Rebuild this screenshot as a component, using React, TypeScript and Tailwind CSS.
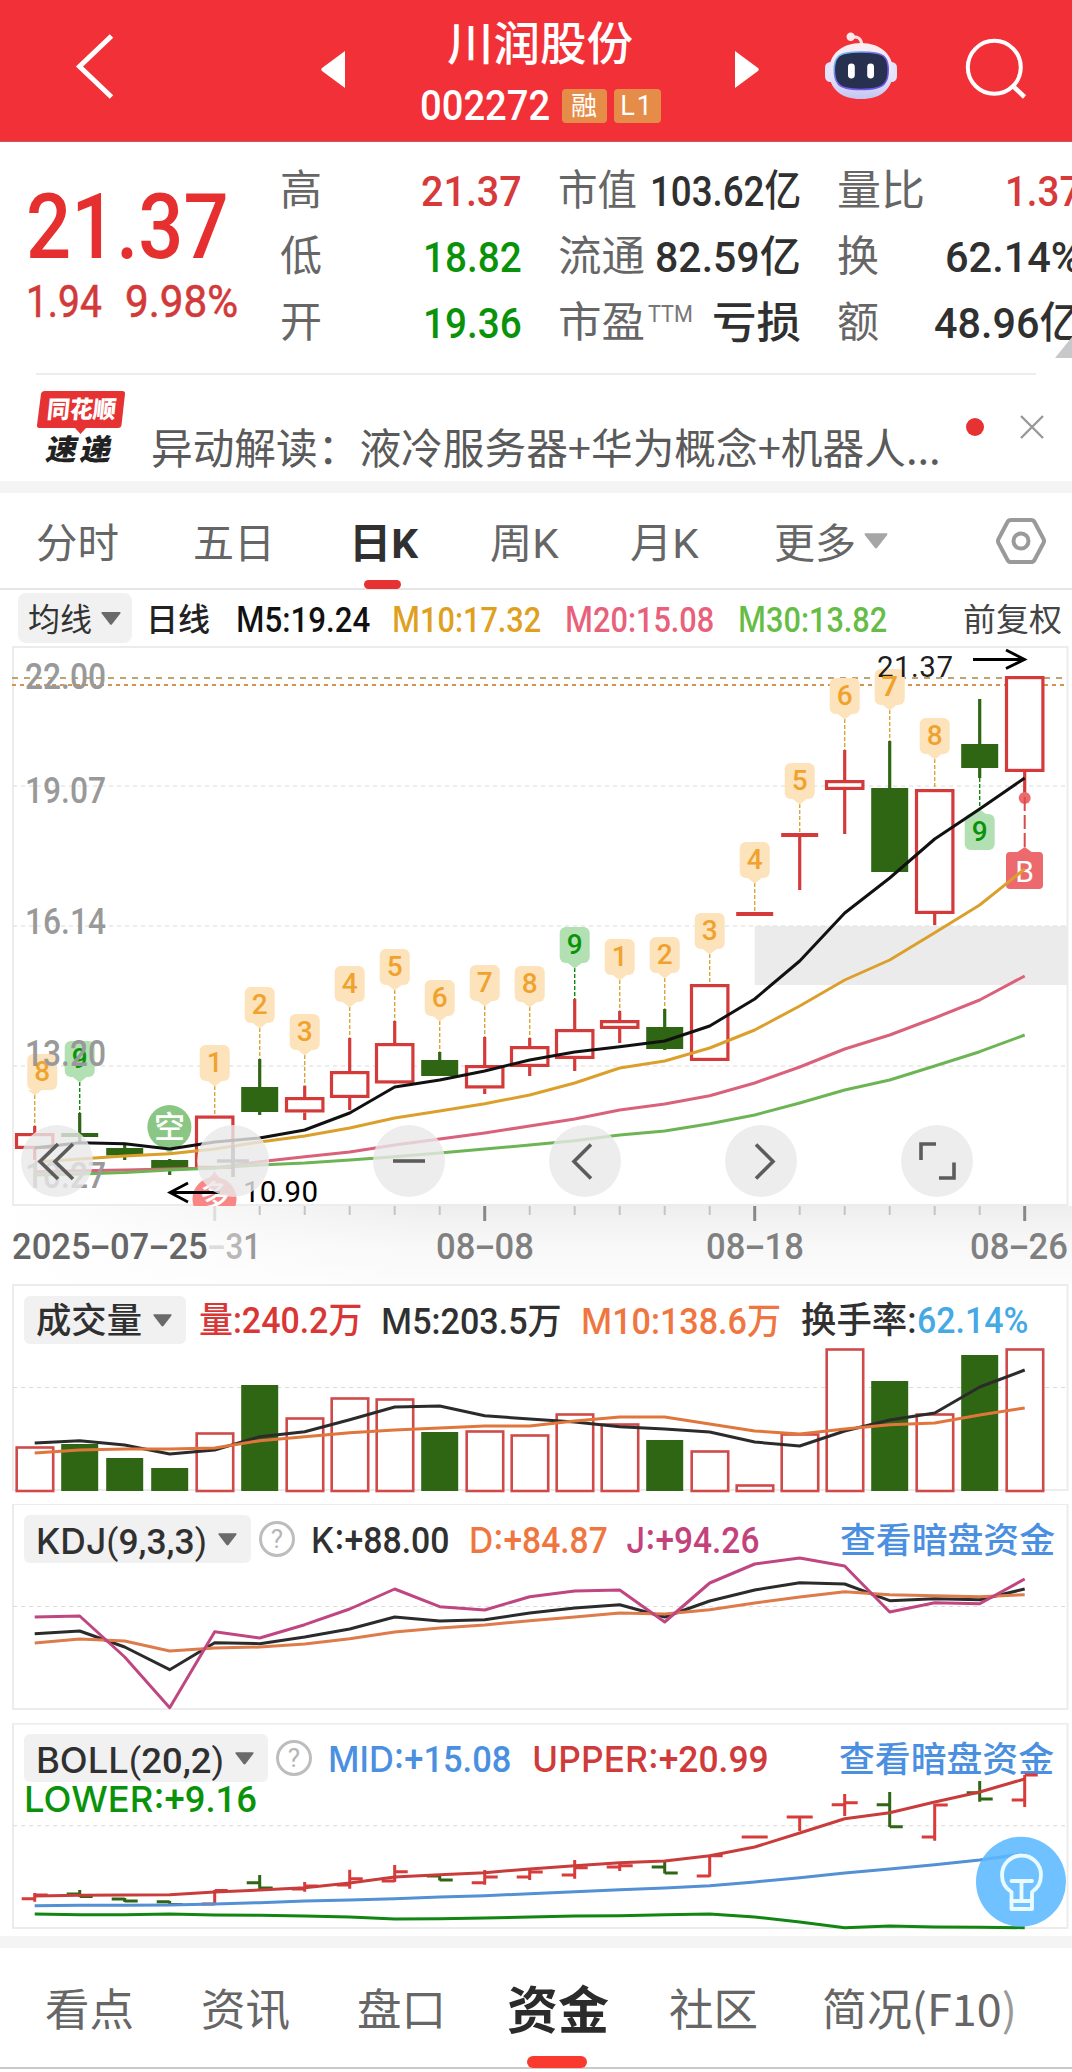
import React, { useLayoutEffect, useRef, useState } from "react";

const FONT = "Roboto, 'Noto Sans CJK SC', sans-serif";
const STEP = 45;
const X0 = 34.7;
const cx = (i: number) => X0 + i * STEP;

/* Condenses or stretches one line of text so that it fills its box. */
function Fit({ className = "", children }: { className?: string; children: React.ReactNode }) {
  const outer = useRef<HTMLSpanElement>(null);
  const inner = useRef<HTMLSpanElement>(null);
  const [k, setK] = useState(1);
  useLayoutEffect(() => {
    if (outer.current && inner.current) {
      setK(outer.current.clientWidth / inner.current.offsetWidth);
    }
  }, []);
  return (
    <span ref={outer} className={`inline-block shrink-0 whitespace-nowrap ${className}`}>
      <span ref={inner} className="inline-block origin-left" style={{ transform: `scaleX(${k})` }}>
        {children}
      </span>
    </span>
  );
}

/* Wide label letters followed by narrow figures. */
function Metric({ label, value, className }: { label: string; value: string; className: string }) {
  return (
    <Fit className={className}>
      <span className="font-['Inter','Noto_Sans_CJK_SC',sans-serif]">{label}</span>
      {value}
    </Fit>
  );
}

function Caret({ className }: { className: string }) {
  return (
    <svg viewBox="0 0 20 13" className={`shrink-0 ${className}`} fill="currentColor">
      <path d="M1 0H19Q20 .4 19.3 1.4L11 12.2Q10 13.2 9 12.2L.7 1.4Q0 .4 1 0Z" />
    </svg>
  );
}

function Help({ className = "" }: { className?: string }) {
  return (
    <span
      className={`flex h-[36px] w-[36px] shrink-0 items-center justify-center rounded-full border-[3px] border-[#bdbdbd] text-[26px] leading-none text-[#b5b5b5] ${className}`}
    >
      ?
    </span>
  );
}

/* ---------- header ---------- */

function Robot() {
  return (
    <svg viewBox="822 28 78 76" className="h-[76px] w-[78px] shrink-0">
      <defs>
        <linearGradient id="shell" x1="0" y1="0" x2="0" y2="1">
          <stop offset="0" stopColor="#fdeef2" />
          <stop offset="0.6" stopColor="#e6e2fb" />
          <stop offset="1" stopColor="#c3c6f2" />
        </linearGradient>
        <linearGradient id="rim" x1="0" y1="0" x2="1" y2="1">
          <stop offset="0" stopColor="#5fd3f0" />
          <stop offset="0.5" stopColor="#7a5cf0" />
          <stop offset="1" stopColor="#6d4fe8" />
        </linearGradient>
      </defs>
      <path d="M851 37.5Q861 35 862 45" fill="none" stroke="#fbe0e4" strokeWidth="3" />
      <circle cx="850.7" cy="36.7" r="4.2" fill="#fbe9ec" />
      <rect x="825" y="62" width="12" height="20" rx="5.5" fill="#e4e2fa" />
      <rect x="885" y="62" width="12" height="20" rx="5.5" fill="#e4e2fa" />
      <path d="M861 43C880 43 893 54 893 71C893 89 881 99 861 99C841 99 829 89 829 71C829 54 842 43 861 43Z" fill="url(#shell)" />
      <path
        d="M861 52C873 52 881 53 884.500 57C889.500 62 889.500 78 884.500 83.500C881 88 873 89.500 861 89.500C849 89.500 841 88 838 83.500C833 78 833 62 838 57C841 53 849 52 861 52Z"
        fill="#27304f"
        stroke="url(#rim)"
        strokeWidth="1.6"
      />
      <rect x="848" y="63.5" width="6.8" height="15" rx="3.4" fill="#fff" />
      <rect x="867.2" y="63.5" width="6.8" height="15" rx="3.4" fill="#fff" />
    </svg>
  );
}

function Header() {
  return (
    <header className="flex h-[142px] shrink-0 items-start border-b border-[#c9545a] bg-[#f23037] text-white">
      <svg viewBox="70 30 50 74" className="mt-[30px] ml-[70px] h-[74px] w-[50px] shrink-0" fill="none" stroke="#fff" strokeWidth="5">
        <path d="M111.500 36L79.500 66.500L111.500 97" />
      </svg>
      <svg viewBox="0 0 24 37" className="mt-[51px] ml-[201px] h-[37px] w-[24px] shrink-0" fill="#fff">
        <path d="M24 0V37L1 20Q-.5 18.500 1 17Z" />
      </svg>
      <div className="ml-[56px] flex w-[278px] flex-col items-center">
        <Fit className="mt-[16px] h-[56px] w-[186px] text-[46px] leading-[56px] font-medium">川润股份</Fit>
        <div className="mt-[13px] flex h-[42px] items-center gap-[7px]">
          <Fit className="mr-[5px] w-[130px] text-[42px] leading-[42px] font-medium">002272</Fit>
          <span className="flex h-[34px] w-[45px] items-center justify-center rounded-[4px] bg-[#e58d48] text-[26px] leading-none">融</span>
          <span className="flex h-[34px] w-[47px] items-center justify-center rounded-[4px] bg-[#e58d48] text-[27px] leading-none tracking-[2px]">L1</span>
        </div>
      </div>
      <svg viewBox="0 0 24 37" className="mt-[51px] ml-[56px] h-[37px] w-[24px] shrink-0" fill="#fff">
        <path d="M0 0V37L23 20Q24.500 18.500 23 17Z" />
      </svg>
      <div className="mt-[28px] ml-[63px]">
        <Robot />
      </div>
      <svg viewBox="960 34 70 70" className="mt-[34px] ml-[60px] h-[70px] w-[70px] shrink-0" fill="none" stroke="#fff" strokeWidth="4">
        <circle cx="994.3" cy="67.3" r="26.500" />
        <path d="M1013 86L1024.500 97" strokeWidth="4.500" />
      </svg>
    </header>
  );
}

/* ---------- quote ---------- */

function Quote() {
  const label = "h-[66px] text-[42px] leading-[66px] text-[#666]";
  const value = "h-[66px] text-[43px] leading-[66px] font-medium";
  return (
    <section className="relative flex h-[231px] shrink-0 overflow-hidden">
      <div className="ml-[26px] w-[254px] shrink-0">
        <Fit className="mt-[43px] h-[86px] w-[203px] text-[90px] leading-[86px] font-medium text-[#e63030]">21.37</Fit>
        <div className="mt-[7px] flex gap-[23px] text-[#d23a3a]">
          <Fit className="h-[48px] w-[76px] text-[44px] leading-[48px] [-webkit-text-stroke:0.6px]">1.94</Fit>
          <Fit className="h-[48px] w-[113px] text-[44px] leading-[48px] [-webkit-text-stroke:0.6px]">9.98%</Fit>
        </div>
      </div>
      <div className="mt-[16px] grid w-[242px] shrink-0 content-start">
        <div className="flex justify-between">
          <span className={label}>高</span>
          <Fit className={`${value} w-[101px] text-[#d63a3a]`}>21.37</Fit>
        </div>
        <div className="flex justify-between">
          <span className={label}>低</span>
          <Fit className={`${value} w-[99px] text-[#0a930a]`}>18.82</Fit>
        </div>
        <div className="flex justify-between">
          <span className={label}>开</span>
          <Fit className={`${value} w-[99px] text-[#0a930a]`}>19.36</Fit>
        </div>
      </div>
      <div className="mt-[16px] ml-[36px] grid w-[243px] shrink-0 content-start">
        <div className="flex justify-between">
          <Fit className={`${label} w-[79px]`}>市值</Fit>
          <Fit className={`${value} w-[151px] text-[#303030]`}>103.62亿</Fit>
        </div>
        <div className="flex justify-between">
          <Fit className={`${label} w-[87px]`}>流通</Fit>
          <Fit className={`${value} w-[146px] text-[#303030]`}>82.59亿</Fit>
        </div>
        <div className="flex justify-between">
          <span className="flex">
            <Fit className={`${label} w-[87px]`}>市盈</Fit>
            <Fit className="ml-[3px] h-[50px] w-[45px] text-[24px] leading-[48px] text-[#777]">TTM</Fit>
          </span>
          <Fit className={`${value} w-[89px] text-[#303030]`}>亏损</Fit>
        </div>
      </div>
      <div className="mt-[16px] ml-[36px] grid w-[244px] shrink-0 content-start">
        <div className="flex justify-between">
          <Fit className={`${label} w-[88px]`}>量比</Fit>
          <Fit className={`${value} w-[76px] text-[#d63a3a]`}>1.37</Fit>
        </div>
        <div className="flex justify-between">
          <span className={label}>换</span>
          <Fit className={`${value} w-[136px] text-[#303030]`}>62.14%</Fit>
        </div>
        <div className="flex justify-between">
          <span className={label}>额</span>
          <Fit className={`${value} w-[147px] text-[#303030]`}>48.96亿</Fit>
        </div>
      </div>
      <svg viewBox="0 0 17 21" className="absolute right-0 bottom-[15px] h-[21px] w-[17px]" fill="#c8c8c8">
        <path d="M17 0V21H0Z" />
      </svg>
    </section>
  );
}

function News() {
  return (
    <section className="mx-[36px] flex h-[108px] shrink-0 items-start border-t-2 border-[#ececec]">
      <div className="relative mt-[16px] h-[74px] w-[90px] shrink-0">
        <svg viewBox="36 391 90 43" className="h-[43px] w-[90px]" fill="#e63232">
          <path d="M45 391H122Q125.500 391 125 394L121.500 425Q121 428 118 428H86L80.500 434L75 428H39.500Q36.500 428 37 425L41 394Q41.500 391 45 391Z" />
        </svg>
        <Fit className="absolute top-[5px] left-[11px] h-[28px] w-[69px] -skew-x-6 text-[24px] leading-[28px] font-black text-white">同花顺</Fit>
        <Fit className="absolute top-[43px] left-[11px] h-[32px] w-[65px] -skew-x-12 text-[29px] leading-[32px] font-black text-[#222]">
          速<span className="inline-block w-[3px]" />递
        </Fit>
      </div>
      <Fit className="mt-[44px] ml-[25px] h-[54px] w-[790px] text-[42px] leading-[54px] text-[#5a5a5a]">
        <span className="font-['Noto_Sans_CJK_SC',sans-serif]">异动解读：液冷服务器+华为概念+机器人...</span>
      </Fit>
      <span className="mt-[43px] ml-[25px] h-[18px] w-[18px] shrink-0 rounded-full bg-[#e63232]" />
      <svg viewBox="0 0 24 24" className="mt-[40px] ml-[36px] h-[24px] w-[24px] shrink-0" stroke="#999" strokeWidth="2.4">
        <path d="M1 1L23 23M23 1L1 23" />
      </svg>
    </section>
  );
}

function PeriodTabs() {
  const t = "h-[95px] text-[41px] leading-[102px] text-[#666]";
  return (
    <nav className="flex h-[97px] shrink-0 items-start border-b-2 border-[#e6e6e6]">
      <Fit className={`${t} ml-[36px] w-[83px]`}>分时</Fit>
      <Fit className={`${t} ml-[74px] w-[82px]`}>五日</Fit>
      <div className="ml-[74px] flex w-[69px] shrink-0 flex-col items-start">
        <Fit className="h-[87px] w-[69px] text-[41px] leading-[102px] font-bold text-[#303030]">日K</Fit>
        <span className="ml-[15px] h-[9px] w-[37px] rounded-full bg-[#e63232]" />
      </div>
      <Fit className={`${t} ml-[72px] w-[69px]`}>周K</Fit>
      <Fit className={`${t} ml-[71px] w-[69px]`}>月K</Fit>
      <Fit className={`${t} ml-[75px] w-[82px]`}>更多</Fit>
      <Caret className="mt-[39px] ml-[8px] h-[18px] w-[24px] text-[#a6a6a6]" />
      <svg viewBox="0 0 52 50" className="mt-[23px] ml-[107px] h-[50px] w-[52px] shrink-0" fill="none" stroke="#9a9a9a" strokeWidth="4" strokeLinejoin="round">
        <path d="M16 4H36Q38.500 4 39.500 6L48.500 23Q49.500 25 48.500 27L39.500 44Q38.500 46 36 46H16Q13.500 46 12.500 44L3.500 27Q2.500 25 3.500 23L12.500 6Q13.500 4 16 4Z" />
        <circle cx="26" cy="25" r="7.500" />
      </svg>
    </nav>
  );
}

function AverageRow() {
  const m = "h-[50px] text-[35px] leading-[53px]";
  return (
    <div className="flex h-[56px] shrink-0 items-start pt-[3px] font-medium">
      <div className="ml-[18px] flex h-[50px] w-[114px] shrink-0 items-center rounded-[8px] bg-[#f1f1f1] pl-[10px] text-[#333]">
        <Fit className="h-[50px] w-[64px] text-[32px] leading-[54px] font-normal">均线</Fit>
        <Caret className="ml-[9px] h-[13px] w-[20px] text-[#6a6a6a]" />
      </div>
      <Fit className="ml-[14px] h-[50px] w-[64px] text-[32px] leading-[54px] text-[#222]">日线</Fit>
      <Metric label="M" value="5:19.24" className={`${m} ml-[26px] w-[134px] text-[#111]`} />
      <Metric label="M" value="10:17.32" className={`${m} ml-[22px] w-[149px] text-[#dfa01f]`} />
      <Metric label="M" value="20:15.08" className={`${m} ml-[24px] w-[149px] text-[#e8607a]`} />
      <Metric label="M" value="30:13.82" className={`${m} ml-[24px] w-[149px] text-[#66bd46]`} />
      <Fit className="ml-[76px] h-[50px] w-[99px] text-[32px] leading-[54px] font-normal text-[#444]">前复权</Fit>
    </div>
  );
}

/* ---------- main chart ---------- */

type Candle = { up: boolean; hi: number; top: number; bot: number; lo: number };
const c = (up: boolean, hi: number, top: number, bot: number, lo: number): Candle => ({ up, hi, top, bot, lo });
const candles: Candle[] = [
  c(true, 1126, 1133, 1149, 1160), c(false, 1113, 1133, 1137, 1142), c(false, 1144, 1148, 1155.5, 1160),
  c(false, 1159, 1160, 1168, 1175), c(true, 1115.5, 1115.5, 1169, 1169), c(false, 1059, 1087, 1112, 1115),
  c(true, 1085.7, 1097, 1112.5, 1120), c(true, 1038, 1071, 1098, 1110), c(true, 1021, 1043, 1083.5, 1084),
  c(false, 1052, 1060, 1076, 1076), c(true, 1037, 1065, 1088.5, 1094), c(true, 1038, 1046, 1067, 1076),
  c(true, 999, 1029, 1059, 1071), c(true, 1011, 1020, 1029, 1043), c(false, 1009, 1027, 1049, 1050),
  c(true, 984, 984, 1061, 1061), c(true, 912, 912, 916, 916), c(true, 833, 833, 837, 890),
  c(true, 750, 780, 790, 834), c(false, 741, 788, 872, 872), c(true, 789, 789, 914, 925),
  c(false, 699, 744, 768, 778), c(true, 676, 676, 772, 797),
];

const ma5 = [1148, 1142.7, 1143.7, 1149, 1142, 1138, 1130, 1113, 1087, 1080, 1071, 1060, 1052, 1046.7, 1041, 1026, 999, 961, 913, 878, 839, 809, 778];
const ma10 = [1162, 1159, 1156, 1153.7, 1149, 1142, 1136, 1128, 1118, 1111, 1103.7, 1095, 1083, 1068, 1061, 1048, 1030, 1006, 980, 960, 932.7, 905, 869];
const ma20 = [1171.7, 1170.7, 1170, 1169, 1168, 1161.7, 1156.7, 1152, 1145, 1139, 1133, 1126, 1119, 1110, 1104, 1095.7, 1083, 1067, 1049, 1035, 1018, 1000, 976];
const ma30 = [1175, 1174, 1172.5, 1170, 1168, 1165, 1163, 1160, 1156.7, 1153, 1149, 1145, 1140.7, 1135, 1131, 1123.7, 1115, 1103, 1090, 1080, 1066, 1051.7, 1035];

const tags: [number, string, number][] = [
  [0, "8", 1054], [1, "9", 1041], [4, "1", 1045], [5, "2", 987], [6, "3", 1014], [7, "4", 966], [8, "5", 949],
  [9, "6", 980], [10, "7", 965], [11, "8", 966], [12, "9", 927], [13, "1", 939], [14, "2", 937], [15, "3", 913],
  [16, "4", 842], [17, "5", 763], [18, "6", 678], [19, "7", 669], [20, "8", 718],
];

function Line({ ys, color, width = 3 }: { ys: number[]; color: string; width?: number }) {
  return (
    <polyline
      points={ys.map((y, i) => `${cx(i)},${y}`).join(" ")}
      fill="none"
      stroke={color}
      strokeWidth={width}
      strokeLinejoin="round"
    />
  );
}

function Tag({ i, n, y }: { i: number; n: string; y: number }) {
  const green = n === "9";
  const x = cx(i);
  const bx = i === 0 ? x + 7.5 : x;
  const fill = green ? "#b2e0b2" : "#fde3bb";
  return (
    <g>
      <line x1={x} x2={x} y1={y + 41} y2={candles[i].hi} stroke={green ? "#0b8a0b" : "#d9a63a"} strokeWidth="1.4" strokeDasharray="4 2" />
      <rect x={bx - 15} y={y} width="30" height="36" rx="6" fill={fill} />
      <path d={`M${x - 7} ${y + 36}H${x + 7}L${x} ${y + 41.5}Z`} fill={fill} />
      <text x={bx} y={y + 27} textAnchor="middle" fontSize="28" fontWeight="500" fill={green ? "#0a930a" : "#f0a22e"}>
        {n}
      </text>
    </g>
  );
}

function AxisPrice({ y, children }: { y: number; children: string }) {
  return (
    <text x="25" y={y} fontSize="36" fontWeight="500" fill="#999" textLength="81" lengthAdjust="spacingAndGlyphs">
      {children}
    </text>
  );
}

function PriceChart() {
  return (
    <svg viewBox="0 646 1072 560" className="block h-[560px] w-full" fontFamily={FONT}>
      <rect x="13" y="647" width="1054.500" height="558" fill="none" stroke="#ececec" strokeWidth="2" />
      <rect x="754.7" y="926" width="313" height="59" fill="#ebebeb" />
      {[786, 926, 1066].map((y) => (
        <line key={y} x1="13" x2="1067" y1={y} y2={y} stroke="#e6e6e6" strokeWidth="1.6" strokeDasharray="4 4" />
      ))}
      <line x1="12" x2="1067" y1="678" y2="678" stroke="#bda374" strokeWidth="2" strokeDasharray="6 6" />
      <line x1="12" x2="1067" y1="685" y2="685" stroke="#d9924e" strokeWidth="2" strokeDasharray="4 4" />

      {candles.map((k, i) => {
        const color = k.up ? "#d43a3a" : "#2f6613";
        const x = cx(i);
        return (
          <g key={i} stroke={color} strokeWidth="3.2">
            {k.hi < k.top && <line x1={x} x2={x} y1={k.hi} y2={k.top} />}
            {k.lo > k.bot && <line x1={x} x2={x} y1={k.bot} y2={k.lo} />}
            {k.up && k.bot - k.top > 5 ? (
              <rect x={x - 18.200} y={k.top + 1.6} width="36.400" height={k.bot - k.top - 3.2} fill="#fff" />
            ) : (
              <rect x={x - 18.500} y={k.top} width="37" height={k.bot - k.top} fill={color} stroke="none" />
            )}
          </g>
        );
      })}

      <g opacity="0.9">
        <circle cx="169.400" cy="1127" r="22" fill="#7fc177" />
        <path d="M163 1147L169.400 1155L176 1147Z" fill="#a9d6a4" />
        <text x="169.400" y="1138" textAnchor="middle" fontSize="31" fontWeight="500" fill="#fff">空</text>
      </g>
      <g>
        <path d="M202 1183Q212 1177 214.500 1171Q217 1177 227 1183Z" fill="#f59a9a" />
        <circle cx="214.500" cy="1199" r="22" fill="#f98585" />
        <text x="214.500" y="1206" textAnchor="middle" fontSize="30" fontWeight="500" fill="#fff">多</text>
        <rect x="190" y="1206" width="50" height="20" fill="#fff" />
      </g>

      {tags.map(([i, n, y]) => (
        <Tag key={i} i={i} n={n} y={y} />
      ))}
      <text x="877" y="677" fontSize="29.500" fill="#000" fillOpacity="0.9" textLength="76">21.37</text>
      <text x={cx(19)} y="696" textAnchor="middle" fontSize="28" fontWeight="500" fill="#f0a22e">7</text>
      <g>
        <line x1={cx(21)} x2={cx(21)} y1="778" y2="810" stroke="#0b8a0b" strokeWidth="1.4" strokeDasharray="4 2" />
        <path d={`M${cx(21) - 7} 814.500L${cx(21)} 809.500L${cx(21) + 7} 814.500Z`} fill="#b2e0b2" />
        <rect x={cx(21) - 15} y="814" width="30" height="36" rx="6" fill="#b2e0b2" />
        <text x={cx(21)} y="841" textAnchor="middle" fontSize="28" fontWeight="500" fill="#0a930a">9</text>
      </g>
      <g>
        <circle cx="1024.7" cy="798" r="6" fill="#ec6a6e" />
        <line x1="1024.7" x2="1024.7" y1="797" y2="848" stroke="#d94a4a" strokeWidth="2" strokeDasharray="14 4" />
        <path d="M1016 853L1024.7 847L1033 853Z" fill="#ec6a6e" />
        <rect x="1006" y="852" width="37" height="37" rx="4" fill="#ec6a6e" />
        <text x="1024.7" y="881.500" textAnchor="middle" fontSize="30" fill="#fff">B</text>
      </g>

      <Line ys={ma20} color="#d9627a" />
      <Line ys={ma30} color="#6db554" />
      <Line ys={ma10} color="#dba02c" />
      <Line ys={ma5} color="#111" />

      <g fill="none" stroke="#000" strokeWidth="2.8">
        <path d="M973 659.500H1024M1006 650L1024.500 659.500L1006 668.500" />
        <path d="M170 1192.500H220M188 1183L170 1192.500L188 1202" />
      </g>
      <text x="243" y="1201.500" fontSize="29.500" fill="#000" textLength="75">10.90</text>

      <AxisPrice y={689}>22.00</AxisPrice>
      <AxisPrice y={803}>19.07</AxisPrice>
      <AxisPrice y={934}>16.14</AxisPrice>
      <AxisPrice y={1065.500}>13.20</AxisPrice>
      <AxisPrice y={1188}>10.27</AxisPrice>
    </svg>
  );
}

const controls: { name: string; d: string; faded?: boolean }[] = [
  { name: "first", d: "M37 19L19 36.500L37 54M52 19L34 36.500L52 54" },
  { name: "zoom in", d: "M20 36H52M36 20V52", faded: true },
  { name: "zoom out", d: "M20 36H52" },
  { name: "previous", d: "M42 19.500L25 36.500L42 53.500" },
  { name: "next", d: "M31 19.500L48 36.500L31 53.500" },
  { name: "full screen", d: "M20 35V19H35M38 53H53V37.500" },
];

function ChartControls() {
  return (
    <div className="absolute top-[479px] left-[21px] flex gap-[104px]">
      {controls.map((b) => (
        <button key={b.name} aria-label={b.name} className="h-[72px] w-[72px] rounded-full bg-[#e8e8e8]/80">
          <svg viewBox="0 0 72 72" className="h-full w-full" fill="none" stroke={b.faded ? "#cfcfcf" : "#5c5c5c"} strokeWidth="3.600">
            <path d={b.d} />
          </svg>
        </button>
      ))}
    </div>
  );
}

function Dash() {
  return <span className="inline-block w-[20px] scale-x-[1.8] text-center">-</span>;
}

function DateLabel({ text, className }: { text: string; className: string }) {
  return (
    <Fit className={`text-[36px] leading-[42px] font-medium ${className}`}>
      {text.split("").map((ch, i) => (ch === "-" ? <Dash key={i} /> : ch))}
    </Fit>
  );
}

function DateAxis() {
  return (
    <div className="h-[78px] bg-linear-to-b from-[#eeeeee] via-[#f8f8f8] to-[#fcfcfc]">
      <div className="h-full w-full bg-linear-to-r from-white from-0% to-white/0 to-40%">
        <svg viewBox="0 1206 1072 17" className="block h-[17px] w-full">
          {Array.from({ length: 19 }, (_, k) => k + 4).map((i) => {
            const major = (i - 4) % 6 === 0;
            return (
              <line
                key={i}
                x1={cx(i)}
                x2={cx(i)}
                y1="1206"
                y2={major ? 1221 : 1215}
                stroke={i === 4 ? "#dedede" : major ? "#888" : "#c4c4c4"}
                strokeWidth={major ? 3 : 2}
              />
            );
          })}
        </svg>
        <div className="flex pt-[3px] text-[#808080]">
          <DateLabel text="2025-07-25" className="ml-[12px] w-[196px] text-[#666]" />
          <Fit className="w-[53px] text-[36px] leading-[42px] font-medium">
            <span className="text-[#dcdcdc]"><Dash /></span>
            <span className="text-[#b8b8b8]">3</span>
            <span className="text-[#999]">1</span>
          </Fit>
          <DateLabel text="08-08" className="ml-[175px] w-[98px]" />
          <DateLabel text="08-18" className="ml-[172px] w-[98px]" />
          <DateLabel text="08-26" className="ml-[166px] w-[98px]" />
        </div>
      </div>
    </div>
  );
}

/* ---------- indicator panels ---------- */

const volumes: [boolean, number][] = [
  [true, 1446], [false, 1444], [false, 1458], [false, 1468], [true, 1432], [false, 1385], [true, 1417], [true, 1397],
  [true, 1398], [false, 1432], [true, 1430], [true, 1434], [true, 1413], [true, 1423], [false, 1440], [true, 1450],
  [true, 1484], [true, 1433], [true, 1348], [false, 1381], [true, 1413], [false, 1355], [true, 1348],
];
const vol5 = [1443, 1440.7, 1445, 1454, 1450, 1436.7, 1431.7, 1419.7, 1407, 1406, 1415.7, 1419, 1422, 1426.7, 1429, 1432, 1442, 1446, 1431, 1420, 1413, 1387, 1370];
const vol10 = [1453, 1450, 1449, 1449, 1448, 1440.7, 1436.7, 1432.7, 1430, 1428, 1426, 1426, 1421, 1417, 1417, 1424, 1431, 1434, 1429, 1424.7, 1423, 1415, 1408];
const kdjJ = [1617, 1616, 1657, 1707.7, 1631.7, 1638, 1624.7, 1609, 1589, 1606.7, 1610, 1596.7, 1591, 1590, 1622, 1583, 1564, 1558, 1566, 1612, 1602.7, 1603.7, 1579];
const kdjK = [1633.7, 1631, 1647, 1669.7, 1642.7, 1643.7, 1637, 1629, 1617, 1621, 1619.7, 1613, 1608, 1604.7, 1617, 1601, 1590, 1582.7, 1584, 1600.7, 1598.7, 1599.7, 1589];
const kdjD = [1643, 1639, 1641, 1651, 1648, 1647, 1644, 1638.7, 1632, 1628, 1625, 1620.7, 1617, 1613, 1614, 1609.7, 1603, 1597, 1591.7, 1594.7, 1595.7, 1596.7, 1594.7];
const bollU = [1896, 1895.3, 1895, 1894.7, 1892, 1890, 1887.7, 1883, 1877, 1874.7, 1872.7, 1869, 1865.7, 1862.7, 1861, 1855.7, 1847, 1833, 1818.7, 1812.7, 1802, 1792, 1779];
const bollM = [1905.7, 1905.3, 1905.3, 1905, 1904, 1902.7, 1901, 1900, 1898.7, 1897, 1895.7, 1893.7, 1891.7, 1889.7, 1888, 1885.7, 1882, 1877.7, 1873, 1869, 1864.7, 1860, 1853.7];
const bollL = [1914, 1914.7, 1914.7, 1914, 1915, 1915.3, 1916, 1917, 1919, 1918.7, 1918, 1917, 1916, 1915.7, 1914.7, 1914, 1917, 1922, 1927.7, 1926, 1927, 1927.3, 1927.7];
/* up, high, low, open, close */
const ohlc: [boolean, number, number, number, number][] = [
  [true, 1893, 1901.7, 1898.7, 1895], [false, 1890, 1897, 1894, 1896.5], [false, 1898, 1902, 1899, 1901],
  [false, 1901, 1905, 1901.7, 1904.5], [true, 1890, 1905, 1904, 1890.5], [false, 1875, 1889, 1882.7, 1888],
  [true, 1882, 1891.7, 1889, 1886], [true, 1869.7, 1888.7, 1885, 1878.7], [true, 1865, 1882, 1881, 1871.7],
  [false, 1875, 1880.5, 1876, 1880], [true, 1870, 1884.7, 1882.7, 1877], [true, 1870, 1880, 1877, 1872],
  [true, 1860, 1878.7, 1875, 1867.7], [true, 1862.7, 1871, 1867, 1865.7], [false, 1862, 1873.5, 1867, 1873],
  [true, 1855.7, 1876.7, 1876, 1855.7], [true, 1837, 1837, 1837, 1837], [true, 1817, 1831, 1817, 1817],
  [true, 1794, 1816, 1804.7, 1802.7], [false, 1792, 1827, 1804.7, 1826.7], [true, 1804, 1840.7, 1837, 1805],
  [false, 1781, 1801.7, 1792.7, 1799], [true, 1775, 1807, 1800, 1775],
];

function Frame({ top, bottom }: { top: number; bottom: number }) {
  const mid = (top + bottom) / 2;
  return (
    <g fill="none">
      <rect x="13" y={top} width="1054.500" height={bottom - top} stroke="#ececec" strokeWidth="2" />
      <line x1="13" x2="1067" y1={mid} y2={mid} stroke="#dcdcdc" strokeWidth="1.2" strokeDasharray="4 4" />
    </g>
  );
}

function Picker({ label, className, textClass }: { label: React.ReactNode; className: string; textClass: string }) {
  return (
    <div className={`ml-[24px] flex h-[48px] shrink-0 items-center rounded-[6px] bg-[#f1f1f1] pl-[12px] text-[#303030] ${className}`}>
      <Fit className={`h-[48px] text-[35px] leading-[52px] font-medium ${textClass}`}>{label}</Fit>
      <Caret className="ml-[11px] h-[13px] w-[19px] text-[#6a6a6a]" />
    </div>
  );
}

const stat = "h-[48px] text-[36px] leading-[51px] font-medium";
const link = "h-[48px] w-[215px] text-[35.500px] leading-[52px] font-medium text-[#4a8fe0]";

function VolumePanel() {
  return (
    <section className="relative h-[220px] shrink-0">
      <svg viewBox="0 1284 1072 220" className="absolute inset-0 h-full w-full">
        <Frame top={1285} bottom={1490} />
        {volumes.map(([up, y], i) =>
          up ? (
            <rect key={i} x={cx(i) - 18} y={y + 1.5} width="36.500" height={1490 - y - 0.5} fill="#fff" stroke="#d04a4a" strokeWidth="2.6" />
          ) : (
            <rect key={i} x={cx(i) - 18.500} y={y} width="37" height={1491 - y} fill="#2f6613" />
          ),
        )}
        <Line ys={vol5} color="#2b2b2b" />
        <Line ys={vol10} color="#e0763c" />
      </svg>
      <div className="relative flex pt-[12px]">
        <Picker label="成交量" className="w-[162px]" textClass="w-[106px]" />
        <Fit className={`${stat} ml-[13px] w-[163px] text-[#d93636]`}>量:240.2万</Fit>
        <Metric label="M" value="5:203.5万" className={`${stat} ml-[19px] w-[181px] text-[#303030]`} />
        <Metric label="M" value="10:138.6万" className={`${stat} ml-[19px] w-[200px] text-[#ef7640]`} />
        <Fit className={`${stat} ml-[20px] w-[116px] text-[#303030]`}>换手率:</Fit>
        <Fit className={`${stat} w-[111px] text-[#45a9e6]`}>62.14%</Fit>
      </div>
    </section>
  );
}

/* Indicator name with light brackets around its parameters. */
function Formula({ name, args }: { name: string; args: string }) {
  return (
    <>
      <span className="font-['Inter',sans-serif]">{name}</span>
      <span className="font-normal">(</span>
      {args}
      <span className="font-normal">)</span>
    </>
  );
}

function KdjPanel() {
  return (
    <section className="relative h-[219px] shrink-0">
      <svg viewBox="0 1504 1072 219" className="absolute inset-0 h-full w-full">
        <Frame top={1504} bottom={1709} />
        <Line ys={kdjK} color="#2b2b2b" />
        <Line ys={kdjD} color="#dd7b4a" />
        <Line ys={kdjJ} color="#bf4680" />
      </svg>
      <div className="relative flex pt-[11px]">
        <Picker label={<Formula name="KDJ" args="9,3,3" />} className="w-[227px]" textClass="w-[171px]" />
        <Help className="mt-[6px] ml-[8px]" />
        <Metric label="K:" value="+88.00" className={`${stat} ml-[16px] w-[139px] text-[#303030]`} />
        <Metric label="D:" value="+84.87" className={`${stat} ml-[19px] w-[139px] text-[#ef7640]`} />
        <Metric label="J:" value="+94.26" className={`${stat} ml-[18px] w-[133px] text-[#c2427c]`} />
        <Fit className={`${link} ml-[81px]`}>查看暗盘资金</Fit>
      </div>
    </section>
  );
}

function BollPanel() {
  return (
    <section className="relative h-[213px] shrink-0">
      <svg viewBox="0 1723 1072 213" className="absolute inset-0 h-full w-full">
        <Frame top={1723.5} bottom={1928} />
      </svg>
      <div className="relative flex pt-[11px]">
        <Picker label={<Formula name="BOLL" args="20,2" />} className="w-[244px]" textClass="w-[188px]" />
        <Help className="mt-[6px] ml-[8px]" />
        <Metric label="MID:" value="+15.08" className={`${stat} ml-[16px] w-[183px] text-[#4a8fe0]`} />
        <Metric label="UPPER:" value="+20.99" className={`${stat} ml-[21px] w-[237px] text-[#cf3a3a]`} />
        <Fit className={`${link} ml-[70px]`}>查看暗盘资金</Fit>
      </div>
      <Metric label="LOWER:" value="+9.16" className="relative ml-[24px] block h-[34px] w-[233px] text-[36px] leading-[34px] font-medium text-[#0a930a]" />
      <svg viewBox="0 1723 1072 213" className="absolute inset-0 h-full w-full">
        {ohlc.map(([up, hi, lo, o, cl], i) => (
          <path
            key={i}
            d={`M${cx(i)} ${hi}V${lo}M${cx(i) - 13} ${o}H${cx(i)}M${cx(i)} ${cl}H${cx(i) + 13}`}
            fill="none"
            stroke={up ? "#d93a3a" : "#2f6613"}
            strokeWidth="3"
          />
        ))}
        <Line ys={bollL} color="#128512" />
        <Line ys={bollM} color="#5390d4" />
        <Line ys={bollU} color="#c93c3c" />
        <circle cx="1021" cy="1881.7" r="45" fill="#5cb8ff" fillOpacity="0.88" />
        <g fill="none" stroke="#e9fbff" strokeWidth="3.800" strokeLinejoin="round" strokeLinecap="round">
          <path d="M1011.500 1901V1892C1005 1888 1002 1882 1002 1875A19.500 19.500 0 0 1 1041 1875C1041 1882 1038 1888 1032 1892V1901" />
          <path d="M1011.500 1901H1032V1909H1011.500ZM1011.500 1881H1032M1021.500 1881V1901" />
        </g>
      </svg>
    </section>
  );
}

function BottomTabs() {
  const t = "h-[108px] text-[44px] leading-[126px] text-[#666]";
  return (
    <nav className="flex h-[121px] shrink-0 items-start border-b-2 border-[#c9c9c9]">
      <Fit className={`${t} ml-[45px] w-[89px]`}>看点</Fit>
      <Fit className={`${t} ml-[67px] w-[89px]`}>资讯</Fit>
      <Fit className={`${t} ml-[67px] w-[89px]`}>盘口</Fit>
      <div className="ml-[61px] flex w-[102px] shrink-0 flex-col items-start">
        <Fit className="h-[108px] w-[102px] text-[51px] leading-[127px] font-bold text-[#2b2b2b]">资金</Fit>
        <span className="ml-[20px] h-[12px] w-[60px] rounded-[6px] bg-[#fa3a2f]" />
      </div>
      <Fit className={`${t} ml-[60px] w-[89px]`}>社区</Fit>
      <Fit className={`h-[108px] text-[44px] leading-[118px] text-[#666] ml-[64px] w-[195px]`}>
        <span className="font-['Noto_Sans_CJK_SC',sans-serif]">
          简况(F10<span className="text-[#999]">)</span>
        </span>
      </Fit>
    </nav>
  );
}

export default function App() {
  return (
    <main className="flex h-[2072px] w-[1072px] flex-col overflow-hidden bg-white font-[Roboto,'Noto_Sans_CJK_SC',sans-serif]">
      <Header />
      <Quote />
      <News />
      <div className="h-[12px] shrink-0 bg-[#f4f4f4]" />
      <PeriodTabs />
      <AverageRow />
      <section className="relative shrink-0">
        <PriceChart />
        <DateAxis />
        <ChartControls />
      </section>
      <VolumePanel />
      <KdjPanel />
      <BollPanel />
      <div className="h-[12px] shrink-0 bg-[#f4f4f4]" />
      <BottomTabs />
    </main>
  );
}
